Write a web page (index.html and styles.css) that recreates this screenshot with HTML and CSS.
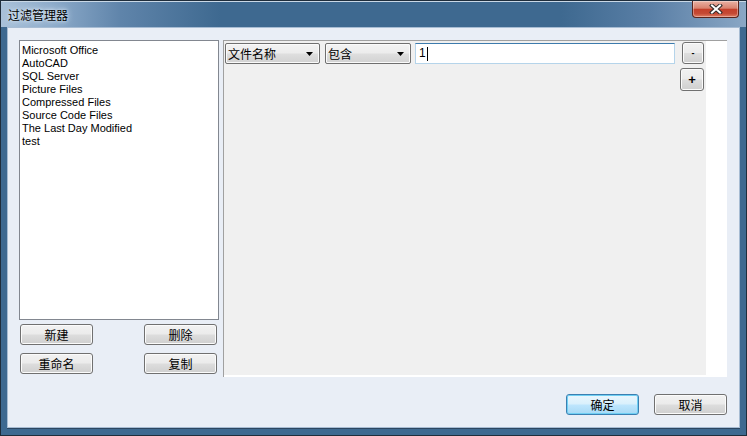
FILE: index.html
```html
<!DOCTYPE html>
<html lang="zh-CN">
<head>
	<meta charset="UTF-8">
	<title>过滤管理器</title>
	<link rel="stylesheet" href="styles.css">
</head>
<body>
<!-- 对话框外框：标题栏 + 客户区 -->
<div class="window">
	<div class="titlebar">
		<span class="title">过滤管理器</span>
		<div class="close">
			<svg width="14" height="10" viewBox="0 0 14 10">
				<path d="M3 1.5 L11 8.5 M11 1.5 L3 8.5" stroke="#2e2a2a" stroke-width="4" stroke-linecap="square" fill="none"/>
				<path d="M3 1.5 L11 8.5 M11 1.5 L3 8.5" stroke="#fff" stroke-width="2" stroke-linecap="square" fill="none"/>
			</svg>
		</div>
	</div>
	<div class="client">
		<div class="main">
			<!-- 左边：过滤器列表和按钮 -->
			<div class="side">
				<ul class="list">
					<li>Microsoft Office</li>
					<li>AutoCAD</li>
					<li>SQL Server</li>
					<li>Picture Files</li>
					<li>Compressed Files</li>
					<li>Source Code Files</li>
					<li>The Last Day Modified</li>
					<li>test</li>
				</ul>
				<div class="side-btns">
					<button class="btn">新建</button>
					<button class="btn">删除</button>
					<button class="btn">重命名</button>
					<button class="btn">复制</button>
				</div>
			</div>
			<!-- 右边：条件编辑区 -->
			<div class="panel">
				<div class="canvas">
					<div class="rule">
						<div class="combo combo-field">文件名称
							<svg class="arrow" width="7" height="4" viewBox="0 0 7 4"><path d="M0 0 H7 L3.5 4 Z" fill="#000"/></svg>
						</div>
						<div class="combo combo-op">包含
							<svg class="arrow" width="7" height="4" viewBox="0 0 7 4"><path d="M0 0 H7 L3.5 4 Z" fill="#000"/></svg>
						</div>
						<div class="textbox">1<span class="caret"></span></div>
						<div class="mini-btns">
							<button class="mini minus">-</button>
							<button class="mini plus">+</button>
						</div>
					</div>
				</div>
			</div>
		</div>
		<div class="footer">
			<button class="btn btn-default">确定</button>
			<button class="btn">取消</button>
		</div>
	</div>
</div>
</body>
</html>
```

FILE: styles.css
```css
/* 整个窗口 747x436 */
html,body{
	margin: 0;
	background: #3e6990;
}
.window{
	width: 745px;
	height: 434px;
	border: 1px solid #1f2d3b;
	background: #3e6990;
	display: flex;
	flex-direction: column;
}
.titlebar{
	height: 27px;
	display: flex;
	justify-content: space-between;
	background: linear-gradient(to right, #a9c1d9 0, #8eaccb 50px, #5f84aa 120px, #3e6990 220px, #3e6990 560px, #5a7fa6 650px, #8aa7c5 745px);
	box-shadow: inset 0 1px 0 #c9d8e6;
}
.title{
	align-self: center;
	padding-left: 7px;
	font: 12px "Noto Sans CJK SC", sans-serif;
	color: #000;
	text-shadow: 0 0 6px #e4eef8, 0 0 3px #e4eef8;
}
.close{
	width: 45px;
	height: 16px;
	margin-right: 7px;
	border: 1px solid #5a241c;
	border-top: none;
	border-radius: 0 0 4px 4px;
	background: linear-gradient(#e9b2a4 0%, #d9826f 45%, #c4402b 52%, #c54a35 78%, #df7c62 100%);
	box-shadow: inset 0 0 0 1px rgba(255,255,255,0.35);
	display: flex;
	align-items: center;
	justify-content: center;
}
.client{
	margin: 0 6px 7px 6px;
	height: 398px;
	border: 1px solid #a7bcd3;
	background: #e9eef6;
	padding: 12px 12px 0 11px;
	display: flex;
	flex-direction: column;
	box-shadow: 0 1px 0 #2b4661;
}
.main{
	display: flex;
	gap: 4px;
	height: 337px;
}
.side{
	width: 201px;
}
.list{
	margin: 0;
	padding: 3px 2px 2px 2px;
	list-style: none;
	height: 273px;
	border: 1px solid #828790;
	background: #fff;
	font: 11px/13px "Liberation Sans", Arial, sans-serif;
	color: #000;
}
.side-btns{
	margin-top: 4px;
	padding-left: 1px;
	display: grid;
	grid-template-columns: 73px 73px;
	column-gap: 51px;
	row-gap: 8px;
}
.btn{
	width: 73px;
	height: 21px;
	padding: 0;
	border: 1px solid #707070;
	border-radius: 3px;
	background: linear-gradient(#f2f2f2 0%, #ebebeb 48%, #dddddd 52%, #cfcfcf 100%);
	box-shadow: inset 0 0 0 1px #fbfbfb;
	font: 12px/19px "Noto Sans CJK SC", sans-serif;
	color: #000;
}
.panel{
	width: 482px;
	height: 334px;
	border-top: 1px solid #a0a0a0;
	border-left: 1px solid #a0a0a0;
	background: #fff;
	padding: 0 21px 2px 0;
}
.canvas{
	height: 334px;
	background: #f0f0f0;
	padding: 2px 2px 0 1px;
	box-sizing: border-box;
}
.rule{
	display: flex;
	align-items: flex-start;
}
.combo{
	height: 21px;
	box-sizing: border-box;
	border: 1px solid #6f6f6f;
	border-radius: 2px;
	background: linear-gradient(#f3f3f3 0%, #ececec 48%, #dedede 52%, #d2d2d2 100%);
	box-shadow: inset 0 0 0 1px #fafafa;
	display: flex;
	align-items: center;
	justify-content: space-between;
	padding: 0 6px 0 2px;
	font: 12px "Noto Sans CJK SC", sans-serif;
	color: #000;
}
.combo-field{
	width: 95px;
}
.combo-op{
	width: 86px;
	margin-left: 5px;
}
.textbox{
	width: 260px;
	height: 21px;
	box-sizing: border-box;
	margin-left: 4px;
	border: 1px solid #b5d4ea;
	border-top-color: #3d7bad;
	background: #fff;
	padding-left: 3px;
	font: 12px/19px "Liberation Sans", Arial, sans-serif;
	color: #000;
	display: flex;
	align-items: center;
}
.caret{
	width: 1px;
	height: 14px;
	background: #000;
	margin-left: 1px;
}
.mini-btns{
	width: 24px;
	margin-left: 5px;
	margin-top: -1px;
	display: flex;
	flex-direction: column;
	align-items: flex-end;
	gap: 4px;
}
.mini{
	padding: 0;
	border: 1px solid #707070;
	border-radius: 3px;
	background: linear-gradient(#f2f2f2 0%, #ebebeb 48%, #dddddd 52%, #cfcfcf 100%);
	box-shadow: inset 0 0 0 1px #fbfbfb;
	font: bold 11px "Liberation Sans", Arial, sans-serif;
	color: #000;
}
.minus{
	width: 22px;
	height: 22px;
	font-size: 9px;
}
.plus{
	width: 24px;
	height: 23px;
	font-size: 13px;
}
.footer{
	margin-top: 17px;
	display: flex;
	justify-content: flex-end;
	gap: 15px;
}
.btn-default{
	border-color: #3c7fb1;
	background: linear-gradient(#eaf6fd 0%, #d9f0fc 48%, #bee6fd 52%, #a7d9f5 100%);
	box-shadow: inset 0 0 0 1px #6fcff3;
}
```
